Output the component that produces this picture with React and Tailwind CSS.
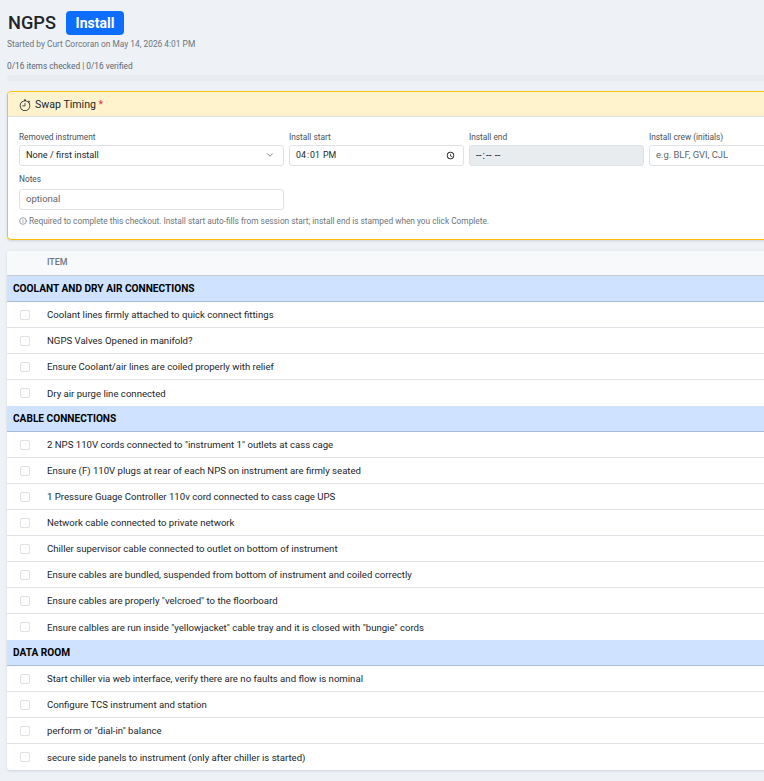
import React from 'react'
import { ChevronDown, Info } from 'lucide-react'

const sections = [
  {
    title: 'COOLANT AND DRY AIR CONNECTIONS',
    items: [
      'Coolant lines firmly attached to quick connect fittings',
      'NGPS Valves Opened in manifold?',
      'Ensure Coolant/air lines are coiled properly with relief',
      'Dry air purge line connected',
    ],
  },
  {
    title: 'CABLE CONNECTIONS',
    items: [
      '2 NPS 110V cords connected to "instrument 1" outlets at cass cage',
      'Ensure (F) 110V plugs at rear of each NPS on instrument are firmly seated',
      '1 Pressure Guage Controller 110v cord connected to cass cage UPS',
      'Network cable connected to private network',
      'Chiller supervisor cable connected to outlet on bottom of instrument',
      'Ensure cables are bundled, suspended from bottom of instrument and coiled correctly',
      'Ensure cables are properly "velcroed" to the floorboard',
      'Ensure calbles are run inside "yellowjacket" cable tray and it is closed with "bungie" cords',
    ],
  },
  {
    title: 'DATA ROOM',
    items: [
      'Start chiller via web interface, verify there are no faults and flow is nominal',
      'Configure TCS instrument and station',
      'perform or "dial-in" balance',
      'secure side panels to instrument (only after chiller is started)',
    ],
  },
]

const inputClass =
  'block w-full h-[21px] px-[6px] bg-white border border-[#dee2e6] rounded-[3px] text-[#212529] outline-none'

const Stopwatch = () => (
  <svg width="12" height="12" viewBox="0 0 16 16" fill="currentColor" className="text-[#212529]">
    <path d="M8.5 5.6a.5.5 0 1 0-1 0v2.9h-3a.5.5 0 0 0 0 1H8a.5.5 0 0 0 .5-.5z" />
    <path d="M6.5 1A.5.5 0 0 1 7 .5h2a.5.5 0 0 1 0 1v.57c1.36.196 2.594.78 3.584 1.64l.012-.013.354-.354-.354-.353a.5.5 0 0 1 .707-.708l1.414 1.415a.5.5 0 1 1-.707.707l-.353-.354-.354.354-.013.012A7 7 0 1 1 7 2.071V1.5a.5.5 0 0 1-.5-.5M8 3a6 6 0 1 0 .001 12A6 6 0 0 0 8 3" />
  </svg>
)

const Field = ({ label, children }) => (
  <label className="block">
    <span className="block h-[9px] mb-[4px] leading-[11px] text-[8.3px] text-[#495057]">{label}</span>
    {children}
  </label>
)

const ChecklistRow = ({ text }) => (
  <div className="h-[26px] flex items-center bg-white border-b border-[#dee2e6] last:border-b-0">
    <div className="w-[40px] pl-[13px] flex items-center">
      <input type="checkbox" className="appearance-none block w-[10px] h-[10px] bg-white border border-[#dee2e6] rounded-[2px]" />
    </div>
    <span className="pt-[2px] text-[9.6px] text-[#212529]">{text}</span>
  </div>
)

export default function App() {
  return (
    <div className="w-[764px] h-[781px] overflow-hidden bg-[#eef1f6] font-['Roboto','Liberation_Sans',sans-serif]">
      <div className="w-[1100px] pl-[7px] pt-[11px]">
        <div className="flex items-center h-[24px]">
          <h1 className="w-[48px] pl-px text-[18.2px] leading-[24px] font-medium text-[#212529]">NGPS</h1>
          <span className="ml-[11px] h-[24px] w-[58px] flex items-center justify-center bg-[#0d6efd] rounded-[4px] text-white text-[14px] font-bold">
            Install
          </span>
        </div>
        <p className="mt-[3px] h-[12px] leading-[12px] text-[8.4px] text-[#6c757d]">
          Started by Curt Corcoran on May 14, 2026 4:01 PM
        </p>
        <p className="mt-[10px] h-[12px] leading-[12px] text-[8.3px] text-[#5c656d]">
          0/16 items checked | 0/16 verified
        </p>
        <div className="mt-[3px] h-[6px] w-[1093px] rounded-[3px] bg-[#e9ecef]" />

        <section className="mt-[10px] w-[1093px] bg-white border border-[#ffc107] rounded-[4px] overflow-hidden shadow-sm">
          <header className="h-[25px] pl-[11px] pt-px flex items-center gap-[4px] bg-[#fff3cd] border-b border-[#dee2e6]">
            <Stopwatch />
            <span className="text-[10.6px] text-[#212529]">
              Swap Timing <span className="text-[10.6px] text-[#dc3545]">*</span>
            </span>
          </header>
          <div className="px-[11px] pt-[15px] pb-[12px]">
            <div className="grid grid-cols-[265px_175px_175px_175px] gap-x-[5px]">
              <Field label="Removed instrument">
                <div className="relative">
                  <select defaultValue="none" className={`${inputClass} pb-[2px] text-[9.2px] appearance-none`}>
                    <option value="none">None / first install</option>
                  </select>
                  <ChevronDown size={10} strokeWidth={1.5} className="absolute right-[9px] top-[5px] text-[#343a40]" />
                </div>
              </Field>
              <Field label="Install start">
                <input type="time" defaultValue="16:01" className={`${inputClass} !px-[5px] text-[8.8px]`} />
              </Field>
              <Field label="Install end">
                <input type="time" disabled className={`${inputClass} !px-[5px] text-[10px] !bg-[#e9ecef]`} />
              </Field>
              <Field label="Install crew (initials)">
                <input type="text" placeholder="e.g. BLF, GVI, CJL" className={`${inputClass} pb-[2px] text-[9.4px] placeholder:text-[#5c656d]`} />
              </Field>
            </div>
            <div className="mt-[8px] w-[265px]">
              <Field label="Notes">
                <div className="pt-[2px]">
                  <input type="text" placeholder="optional" className={`${inputClass} pb-[2px] text-[9.5px] placeholder:text-[#5c656d]`} />
                </div>
              </Field>
            </div>
            <p className="mt-[5px] flex items-center gap-[2px] text-[8.3px] leading-[12px] text-[#6c757d]">
              <Info size={8} />
              Required to complete this checkout. Install start auto-fills from session start; install end is stamped when you click Complete.
            </p>
          </div>
        </section>

        <div className="mt-[10px] w-[1093px] rounded-[3px] overflow-hidden shadow-sm">
          <div className="h-[26px] pl-[40px] flex items-center bg-[#f8f9fa] border-b border-[#c6ccd4] border-t border-t-[#e9ecef]">
            <span className="text-[8.8px] font-medium text-[#6c757d]">ITEM</span>
          </div>
          {sections.map((section) => (
            <div key={section.title}>
              <div className="h-[26px] pl-[6px] flex items-center bg-[#cfe2ff] border-b border-[#a9bcd6]">
                <span className="text-[10.15px] font-bold text-[#000]">{section.title}</span>
              </div>
              {section.items.map((item) => (
                <ChecklistRow key={item} text={item} />
              ))}
            </div>
          ))}
        </div>
      </div>
    </div>
  )
}
